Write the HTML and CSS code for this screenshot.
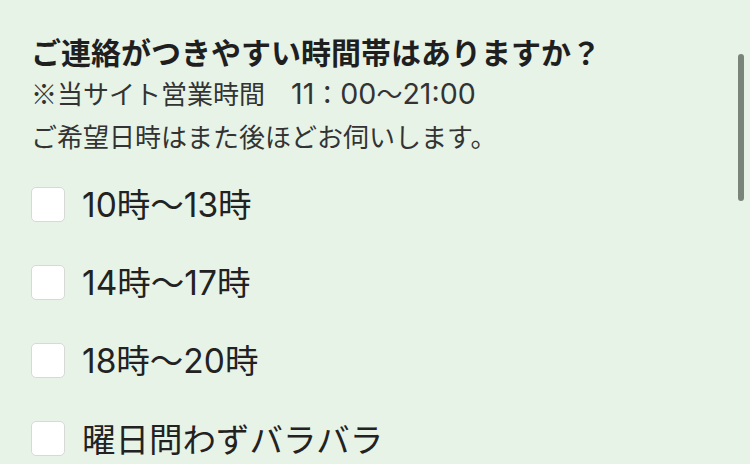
FILE: index.html
```html
<!DOCTYPE html>
<html lang="ja">
<head>
<meta charset="utf-8">
<title>ご連絡がつきやすい時間帯</title>
<link rel="stylesheet" href="styles.css">
</head>
<body>
<main class="page">
  <section class="question">
    <h2 class="title">ご連絡がつきやすい時間帯はありますか？</h2>
    <p class="note">※当サイト営業時間　<span class="latin">11</span>：<span class="latin">00</span>～<span class="latin">21:00</span></p>
    <p class="note">ご希望日時はまた後ほどお伺いします。</p>
    <ul class="options">
      <li class="option"><label class="opt-label"><input class="box" type="checkbox"><span class="opt-text"><span class="latin">10</span>時～<span class="latin">13</span>時</span></label></li>
      <li class="option"><label class="opt-label"><input class="box" type="checkbox"><span class="opt-text"><span class="latin">14</span>時～<span class="latin">17</span>時</span></label></li>
      <li class="option"><label class="opt-label"><input class="box" type="checkbox"><span class="opt-text"><span class="latin">18</span>時～<span class="latin">20</span>時</span></label></li>
      <li class="option"><label class="opt-label"><input class="box" type="checkbox"><span class="opt-text">曜日問わずバラバラ</span></label></li>
    </ul>
  </section>
  <div class="scrollbar"></div>
</main>
</body>
</html>
```
FILE: styles.css
```css
html, body {
  margin: 0;
  padding: 0;
  height: 100%;
  overflow: hidden;
}
body {
  background: #e7f3e7;
  font-family: "Noto Sans CJK JP", sans-serif;
  color: #222;
}
.page {
  position: relative;
  height: 464px;
}
.question {
  padding: 31px 0 0 31px;
}
.title {
  margin: 0 0 1px;
  font-size: 30px;
  line-height: 40px;
  font-weight: 700;
  color: #1f1f1f;
}
.note {
  margin: 0;
  font-size: 26px;
  line-height: 42px;
  font-weight: 400;
  color: #333;
}
.latin {
  font-family: "Inter", "Noto Sans CJK JP", sans-serif;
}
.note .latin {
  font-size: 1.1em;
}
.options {
  list-style: none;
  margin: 30px 0 0;
  padding: 0;
  display: flex;
  flex-direction: column;
  gap: 43px;
}
.opt-label {
  display: flex;
  align-items: center;
  gap: 17px;
  height: 35px;
}
.box {
  appearance: none;
  -webkit-appearance: none;
  margin: 0;
  width: 34px;
  height: 35px;
  box-sizing: border-box;
  background: #fff;
  border: 1.5px solid #d6d9d6;
  border-radius: 5px;
  flex: none;
}
.opt-text {
  font-size: 33.5px;
  line-height: 40px;
  color: #222;
  position: relative;
  top: -1px;
}
.scrollbar {
  position: absolute;
  left: 738px;
  top: 54px;
  width: 6px;
  height: 147px;
  border-radius: 3px;
  background: #7b8479;
}
```
